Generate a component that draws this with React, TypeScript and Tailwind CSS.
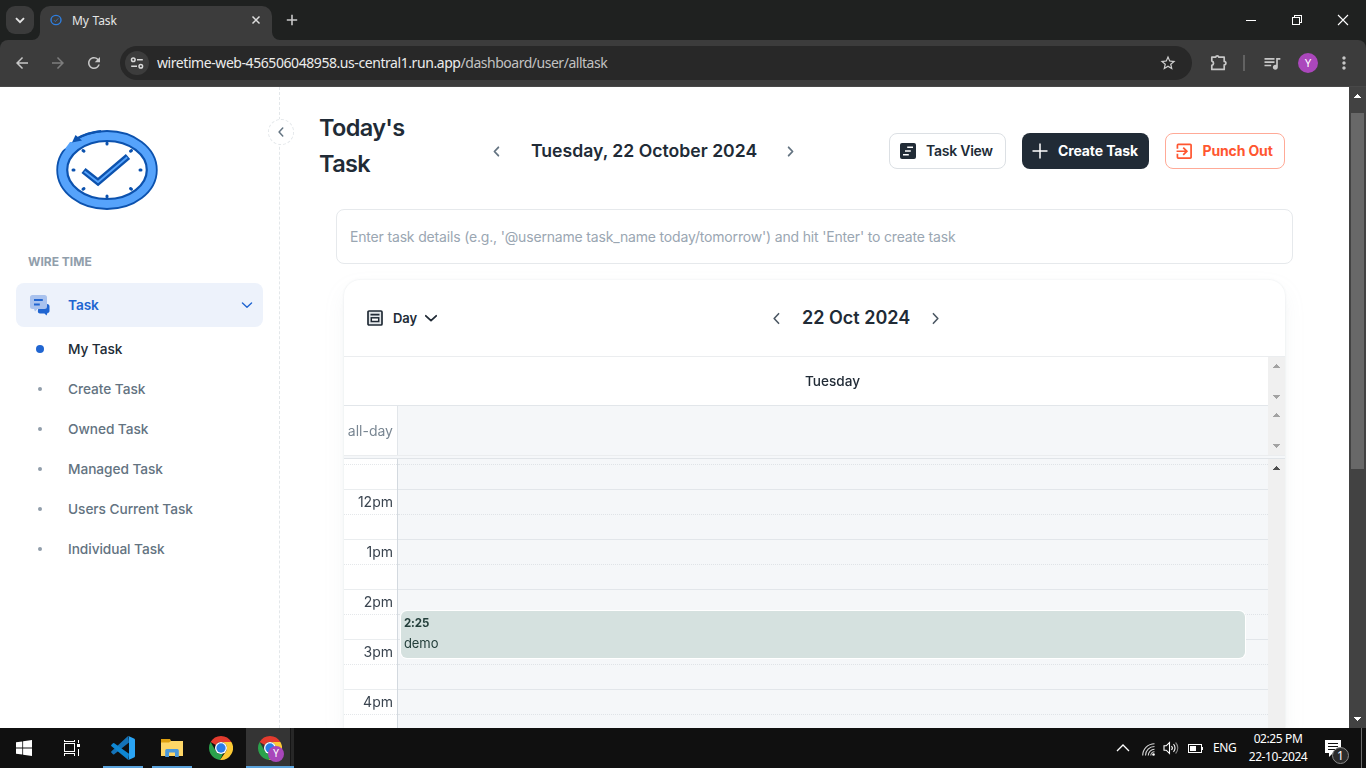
import type { ReactNode } from "react";
import { MdArrowBack, MdArrowForward, MdExitToApp, MdMoreVert, MdQueueMusic, MdRefresh, MdStarBorder } from "react-icons/md";

function Chevron({ dir, className, size = 16, stroke = 1.6 }: { dir: "left" | "right" | "down"; className?: string; size?: number; stroke?: number }) {
  const d = { left: "M10 3.5 5.8 8 10 12.5", right: "M6 3.5 10.2 8 6 12.5", down: "M2.8 5.8 8 10.6 13.2 5.8" }[dir];
  return (
    <svg width={size} height={size} viewBox="0 0 16 16" fill="none" stroke="currentColor" strokeWidth={stroke} strokeLinecap="round" strokeLinejoin="round" className={className}>
      <path d={d} />
    </svg>
  );
}

function Triangle({ up, className }: { up?: boolean; className?: string }) {
  return (
    <svg width="7" height="4" viewBox="0 0 7 4" shapeRendering="crispEdges" fill="currentColor" className={className}>
      {up ? <path d="M3 0h1v1H3zM2 1h3v1H2zM1 2h5v1H1zM0 3h7v1H0z" /> : <path d="M0 0h7v1H0zM1 1h5v1H1zM2 2h3v1H2zM3 3h1v1H3z" />}
    </svg>
  );
}

function ChromeLogo({ size = 24 }: { size?: number }) {
  return (
    <svg width={size} height={size} viewBox="0 0 48 48">
      <path fill="#e33b2e" d="M24 0a24 24 0 0 1 20.8 12H24a12 12 0 0 0-10.4 6L3.2 12A24 24 0 0 1 24 0z" />
      <path fill="#2ba24c" d="M3.2 12 13.6 30A12 12 0 0 0 24 36c1.5 0 3-.3 4.3-.8L22 47.9A24 24 0 0 1 3.2 12z" />
      <path fill="#fcc934" d="M44.8 12A24 24 0 0 1 24 48h-2l12.4-18A12 12 0 0 0 24 12z" />
      <circle cx="24" cy="24" r="12" fill="#fff" />
      <circle cx="24" cy="24" r="9.3" fill="#2a7de9" />
    </svg>
  );
}

function TabStrip() {
  return (
    <div className="flex h-10 shrink-0 items-start bg-[#1f2120] pl-1.5 pt-1.5">
      <div className="flex size-7 items-center justify-center rounded-[9px] bg-[#3b3b3b] text-[#e3e3e3]">
        <svg width="10" height="7" viewBox="0 0 10 7" fill="none" stroke="currentColor" strokeWidth="1.9"><path d="M1 1.2 5 5.2 9 1.2" /></svg>
      </div>
      <div className="relative ml-1.5 flex h-[34px] w-[232px] items-center rounded-t-[10px] bg-[#3c3c3c] pb-1.5 pl-[10px]">
        <svg className="absolute -left-2 bottom-0" width="8" height="8"><path d="M8 0v8H0A8 8 0 0 0 8 0z" fill="#3c3c3c" /></svg>
        <svg className="absolute -right-2 bottom-0" width="8" height="8"><path d="M0 0v8h8A8 8 0 0 1 0 0z" fill="#3c3c3c" /></svg>
        <svg width="12" height="12" viewBox="0 0 12 12" fill="none" stroke="#2f7fe0"><ellipse cx="6" cy="6" rx="5" ry="4.6" strokeWidth="1.4" /><path d="M4 6.2 5.4 7.600 8.300 4.300" strokeWidth=".7" /></svg>
        <span className="ml-2.5 mt-px text-[12px] leading-4 tracking-[-0.12px] text-[#e6e6e6] [word-spacing:0.8px]">My Task</span>
        <svg className="ml-auto mr-[11px]" width="10" height="10" viewBox="0 0 10 10" stroke="#dedede" strokeWidth="1.5"><path d="M1.5 1.5 8.5 8.5M8.5 1.5 1.5 8.5" /></svg>
      </div>
      <svg className="ml-[14px] mt-2" width="12" height="12" viewBox="0 0 12 12" stroke="#c9c9c9" strokeWidth="1.6"><path d="M6 .8v10.4M.8 6h10.4" /></svg>
      <div className="ml-auto mt-2 flex items-center gap-9 pr-[17px] text-white">
        <svg width="10" height="12" viewBox="0 0 10 12" shapeRendering="crispEdges" fill="currentColor" className="translate-x-px"><path d="M0 6h10v1H0z" /></svg>
        <svg width="10" height="10" viewBox="0 0 10 10" fill="none" stroke="currentColor" shapeRendering="crispEdges" className="translate-x-px"><path d="M.5 2.5h7v7h-7zM2.5 2.5v-2h7v7h-2" /></svg>
        <svg width="12" height="12" viewBox="0 0 12 12" stroke="currentColor" strokeWidth="1.1"><path d="M1 1 11 11M11 1 1 11" /></svg>
      </div>
    </div>
  );
}

function Toolbar() {
  return (
    <div className="h-[47px] shrink-0 bg-[#1f2120]">
      <div className="flex h-full items-start rounded-t-[8px] border-b border-[#484848] bg-[#3c3c3c] pl-[13px] pt-1.5">
        <div className="flex h-[34px] items-center gap-[18px] text-[#c7c7c7]">
          <MdArrowBack size={18} />
          <MdArrowForward size={18} className="text-[#7d7d7d]" />
          <MdRefresh size={18} />
        </div>
        <div className="ml-[17px] flex h-[34px] w-[1072px] items-center rounded-full bg-[#282828] pl-[5px] pr-[15px]">
          <div className="flex size-6 items-center justify-center rounded-full bg-[#3c3c3c]">
            <svg width="14" height="14" viewBox="0 0 14 14" fill="none" stroke="#dadada" strokeWidth="1.5"><circle cx="3.3" cy="3.7" r="1.8" /><path d="M7 3.7h5.800M1.200 10.200H7" /><circle cx="10.8" cy="10.2" r="1.8" /></svg>
          </div>
          <div className="ml-2 whitespace-nowrap text-[14px] leading-5 text-[#c2c2c2]">
            <span className="tracking-[-0.43px] text-[#ececec]">wiretime-web-456506048958.us-central1.run.app</span>
            <span className="tracking-[-0.48px]">/dashboard/user/alltask</span>
          </div>
          <MdStarBorder size={18} className="ml-auto text-[#d0d0d0]" />
        </div>
        <div className="flex h-[34px] items-center text-[#c7c7c7]">
          <svg className="ml-[18px]" width="18" height="18" viewBox="0 0 18 18" fill="none" stroke="currentColor" strokeWidth="1.7" strokeLinejoin="round">
            <path d="M1.800 3.200h3.800a1.700 1.700 0 0 1 3.300 0h5.300v4.200a1.700 1.700 0 0 1 0 3.400v4.600H1.800v-4a2.200 2.200 0 0 0 0-4.300z" />
          </svg>
          <div className="ml-[15px] mr-[17px] h-4 w-0.5 bg-[#626262]" />
          <MdQueueMusic size={20} />
          <div className="ml-[16px] flex size-5 items-center justify-center rounded-full bg-[#ab47bc] font-['Roboto'] text-[11px] leading-none text-white">Y</div>
          <MdMoreVert size={20} className="ml-[16px]" />
        </div>
      </div>
    </div>
  );
}

function Logo() {
  return (
    <svg width="104" height="82" viewBox="0 0 104 82" fill="none">
      <ellipse cx="52" cy="41" rx="44.7" ry="33.9" stroke="#0c52ae" strokeWidth="12" />
      <ellipse cx="52" cy="41" rx="44.9" ry="34.1" stroke="#56a3fb" strokeWidth="8" />
      <path d="M2 25 7 17 17 9 25 5 18 14z" fill="#fff" />
      <path d="M9.500 20.500 15 13 22 13 16 19z" fill="#56a3fb" />
      <path d="M22 9.500 C30 5.200 38 3 46 2.200" stroke="#0c52ae" strokeWidth="2.200" />
      <path d="M17 13.500 20.500 6 27 11.500z" fill="#0c52ae" />
      <path d="M28.500 41.500 43 53 73 27.500" stroke="#0c52ae" strokeWidth="6.600" />
      <path d="M29.500 42.500 43 53 72.200 28.300" stroke="#56a3fb" strokeWidth="1.800" />
      <g stroke="#0c52ae" strokeWidth="3" strokeLinecap="round">
        <path d="M52 14v1M52 67v1M18 41h1M85 41h1M28 21.500l1 .7M75.500 22.200l1-.7M28 60.200l1-.7M75.500 59.500l1 .7" />
      </g>
    </svg>
  );
}

const subItems = ["Create Task", "Owned Task", "Managed Task", "Users Current Task", "Individual Task"];

function Sidebar() {
  return (
    <aside className="relative flex w-[280px] shrink-0 flex-col border-r border-dashed border-[#e3e7ea] pl-4 pr-4">
      <div className="ml-[39px] mt-[42px]"><Logo /></div>
      <div className="ml-3 mt-[42px] h-[18px] text-[12px] font-bold leading-[18px] text-[#919eab]">WIRE TIME</div>
      <nav className="mt-[12px] flex flex-col gap-1 text-[13.7px] font-medium text-[#637381]">
        <div className="flex h-11 items-center rounded-lg bg-[#edf2fb] pl-3 pr-2 font-semibold text-[#2065d1]">
          <svg width="24" height="24" viewBox="0 0 24 24">
            <path d="M11 11h8a2.500 2.500 0 0 1 2.500 2.500V18c0 1-.8 2-2 2.100L18.500 22.500 16.500 20.500H12a2.300 2.300 0 0 1-2.200-2.300z" fill="#2065d1" />
            <path d="M4.500 2h12A2.500 2.500 0 0 1 19 4.500v9a2.500 2.500 0 0 1-2.500 2.500H9.500L7 18.600 6 16H4.500A2.500 2.500 0 0 1 2 13.500v-9A2.500 2.500 0 0 1 4.500 2z" fill="#a9c2ee" />
            <path d="M6 7h8.800M6 11.500h5.800" stroke="#2065d1" strokeWidth="1.900" />
          </svg>
          <span className="ml-4 tracking-[-0.1px]">Task</span>
          <Chevron dir="down" className="ml-auto mr-px" size={14} stroke={1.6} />
        </div>
        <div className="flex h-9 items-center pl-3 text-[#212b36]">
          <span className="flex w-6 justify-center"><span className="size-2 rounded-full bg-[#2065d1]" /></span>
          <span className="ml-4 tracking-[-0.08px]">My Task</span>
        </div>
        {subItems.map((t) => (
          <div key={t} className="flex h-9 items-center pl-3">
            <span className="flex w-6 justify-center"><span className="size-1 rounded-full bg-[#919eab]" /></span>
            <span className="ml-4 tracking-[-0.06px]">{t}</span>
          </div>
        ))}
      </nav>
      <div className="absolute -right-[15px] top-8 flex size-[26px] items-center justify-center rounded-full border border-dashed border-[#e3e7ea] bg-white text-[#637381]">
        <Chevron dir="left" size={14} stroke={1.7} />
      </div>
    </aside>
  );
}

function PageHeader() {
  return (
    <div className="ml-10 flex h-[72px] w-[965px] items-center">
      <h1 className="-ml-px w-[170px] text-[23.5px] font-semibold leading-9 tracking-[-0.65px] text-[#212b36]">Today's<br />Task</h1>
      <Chevron dir="left" size={15} stroke={1.9} className="mt-[10px] text-[#637381]" />
      <div className="ml-[27px] mt-[10px] w-[226px] whitespace-nowrap text-[17.6px] font-semibold leading-7 tracking-[0.01px] text-[#212b36]">Tuesday, 22 October 2024</div>
      <Chevron dir="right" size={15} stroke={1.9} className="ml-[26px] mt-[10px] text-[#637381]" />
      <div className="ml-auto mt-[10px] flex gap-4 text-[14px] leading-6">
        <button className="flex h-9 w-[117px] items-center whitespace-nowrap rounded-lg border border-[#dce0e4] pl-[10px] font-semibold tracking-[-0.25px] text-[#212b36]">
          <svg width="16" height="16" viewBox="0 0 16 16"><rect width="16" height="16" rx="2" fill="#212b36" /><path d="M7.200 4.300H13M5 8h5.800M3 11.700h5.800" stroke="#fff" strokeWidth="1.400" /></svg>
          <span className="ml-[10px]">Task View</span>
        </button>
        <button className="flex h-9 w-[127px] items-center whitespace-nowrap rounded-lg bg-[#212b36] pl-[10px] font-bold tracking-[-0.12px] text-white">
          <svg width="16" height="16" viewBox="0 0 16 16" stroke="#fff" strokeWidth="1.500"><path d="M8 .5v15M.5 8h15" /></svg>
          <span className="ml-[10px]">Create Task</span>
        </button>
        <button className="flex h-9 w-[120px] items-center whitespace-nowrap rounded-lg border border-[#ffaa97] pl-[8px] font-bold tracking-[-0.14px] text-[#ff5630]">
          <MdExitToApp size={20.5} />
          <span className="ml-[8px]">Punch Out</span>
        </button>
      </div>
    </div>
  );
}

function HourRow({ label }: { label: string }) {
  return (
    <div className="flex h-[50px] shrink-0">
      <div className="flex w-[53px] flex-col">
        <div className="flex h-[25px] items-center justify-end border-t border-[#eaedef] pr-1 text-[14px] leading-6 text-[#3a444f]">{label}</div>
        <div className="h-[25px] border-t border-dotted border-[#e4e7ea]" />
      </div>
      <div className="flex flex-1 flex-col border-l border-[#d3d9df]">
        <div className="h-[25px] border-t border-[#e2e6ea]" />
        <div className="h-[25px] border-t border-dotted border-[#dfe3e7]" />
      </div>
    </div>
  );
}

function ScrollPair({ className }: { className: string }) {
  return (
    <div className={`flex w-[17px] shrink-0 flex-col items-center justify-between bg-[#f0f0f0] text-[#a3a3a3] ${className}`}>
      <Triangle up />
      <Triangle />
    </div>
  );
}

function Calendar() {
  return (
    <section className="ml-[64px] mt-4 flex w-[941px] flex-1 flex-col overflow-hidden rounded-t-[16px] bg-white">
      <div className="flex h-[76px] shrink-0 items-center pl-[23px] text-[#212b36]">
        <svg width="16" height="16" viewBox="0 0 16 16" fill="none" stroke="currentColor" strokeWidth="1.700"><rect x="1" y="1" width="14" height="14" rx="1" fill="#e3e7ea" /><path d="M3.500 4.700h9" /><rect x="4.300" y="7.800" width="7.400" height="3.700" fill="#fff" strokeWidth="1.500" /></svg>
        <span className="ml-[10px] w-6 text-[13px] font-semibold leading-6 tracking-[-0.1px]">Day</span>
        <Chevron dir="down" size={16} stroke={1.8} className="ml-[6px]" />
        <Chevron dir="left" size={17} stroke={1.5} className="ml-[329px] text-[#4b5763]" />
        <span className="ml-[17px] w-[108px] whitespace-nowrap text-[18px] font-semibold leading-7">22 Oct 2024</span>
        <Chevron dir="right" size={17} stroke={1.5} className="ml-[17px] text-[#4b5763]" />
      </div>
      <div className="flex h-[49px] shrink-0 border-t border-[#ebedef]">
        <div className="flex flex-1 items-center justify-center pl-[53px] text-[13.6px] font-medium leading-6 text-[#212b36]">Tuesday</div>
        <ScrollPair className="pb-1.5 pt-[7px]" />
      </div>
      <div className="flex h-[50px] shrink-0">
        <div className="flex flex-1 border-t border-[#e2e6ea]">
          <div className="flex w-[53px] items-center justify-end pr-1 text-[14px] leading-6 text-[#7a8793]">all-day</div>
          <div className="flex-1 border-l border-[#e2e6ea] bg-[#f5f7f9]" />
        </div>
        <ScrollPair className="pb-[7px] pt-2" />
      </div>
      <div className="h-1 shrink-0 border-y border-b-[#e0e4e8] border-t-[#ebedef] bg-[#f5f7f9]" />
      <div className="flex min-h-0 flex-1">
        <div className="relative flex-1 overflow-hidden bg-[linear-gradient(to_right,#fff_53px,#f5f7f9_53px)]">
          <div className="flex h-[5px]"><div className="w-[53px]" /><div className="flex-1 border-l border-[#d3d9df]" /></div>
          <div className="flex h-[25px]">
            <div className="w-[53px] border-t border-dotted border-[#e4e7ea]" />
            <div className="flex flex-1 border-l border-[#d3d9df]"><div className="flex-1 border-t border-dotted border-[#dfe3e7]" /></div>
          </div>
          {["12pm", "1pm", "2pm", "3pm", "4pm"].map((h) => <HourRow key={h} label={h} />)}
          <div className="absolute left-[57px] top-[152px] h-[47px] w-[844px] rounded-md bg-[#d5e1df] px-[3px] text-[#243f3b] ring-1 ring-white">
            <div className="pt-[3px] text-[11.5px] font-bold leading-[18px] tracking-[-0.15px]">2:25</div>
            <div className="pt-px text-[13px] leading-5 tracking-[-0.1px]">demo</div>
          </div>
        </div>
        <div className="flex w-[17px] justify-center bg-[#f0f0f0] pt-[7px] text-[#505050]"><Triangle up /></div>
      </div>
    </section>
  );
}

function TaskbarApp({ children }: { children: ReactNode }) {
  return <div className="flex h-10 w-12 items-center justify-center">{children}</div>;
}

function Taskbar() {
  return (
    <footer className="flex h-10 shrink-0 items-center bg-[#101010] text-[12px] text-white">
      <TaskbarApp>
        <svg width="16" height="16" viewBox="0 0 16 16" fill="#fff"><path d="M0 2.300 6.300 1.400V7.500H0zM7.100 1.300 16 0V7.500H7.100zM0 8.400h6.300v6.100L0 13.700zM7.100 8.400H16V16L7.100 14.700z" /></svg>
      </TaskbarApp>
      <TaskbarApp>
        <svg width="16" height="16" viewBox="0 0 16 16" fill="none" stroke="#fff" shapeRendering="crispEdges"><path d="M.5 3.500h10v8H.5zM.5 0v1.500h10V0M.5 16v-2.500h10V16M14.500 0v3M14.500 9v7" /><path d="M13 4h3v3h-3z" fill="#fff" stroke="none" /></svg>
      </TaskbarApp>
      <div className="ml-[7px] flex h-10 w-10 items-center justify-center border-b-2 border-[#5ba3dc] pt-0.5">
        <svg width="24" height="24" viewBox="0 0 24 24">
          <path fill="#1573b8" d="M17.300 0 18 6.500 3.300 18.200a1 1 0 0 1-1.300 0L.5 16.800a1 1 0 0 1 0-1.500L16.500.4z" />
          <path fill="#0f87d2" d="M.5 8.700 2 7.300a1 1 0 0 1 1.300-.1L18 17.700 17.300 24 .5 10.200a1 1 0 0 1 0-1.500z" />
          <path fill="#2aa4f4" d="M17.400 0 23 2.500a1.700 1.700 0 0 1 1 1.500v16a1.700 1.700 0 0 1-1 1.500L17.400 24a1.700 1.700 0 0 1-1-.4c.7.600 1.600.1 1.600-.8V1.200c0-.9-1-1.300-1.600-.8z" />
        </svg>
      </div>
      <div className="ml-[9px] flex h-10 w-10 items-center justify-center border-b-2 border-[#5ba3dc] pt-0.5">
        <svg width="22" height="18" viewBox="0 0 22 18"><path fill="#dfa010" d="M0 0h9l1.300 2.500H22V8H0z" /><path fill="#ffd767" d="M0 3.500h8L10 2h12v15H0z" /><path fill="#4a98dc" d="M4.200 18v-6.500A1.500 1.500 0 0 1 5.700 10h10.600a1.500 1.500 0 0 1 1.500 1.500V18H14v-4.500H8V18z" /></svg>
      </div>
      <div className="ml-[9px] flex h-10 w-10 items-center justify-center"><ChromeLogo /></div>
      <div className="relative ml-[5px] flex h-10 w-12 items-center border-b-2 border-[#5ba3dc] bg-[#343434] pl-3 pt-0.5">
        <ChromeLogo />
        <span className="absolute left-[22px] top-[18px] flex size-4 items-center justify-center rounded-full bg-[#a846ba] font-['Roboto'] text-[10px] leading-none text-white">Y</span>
        <span className="absolute right-0 top-0 h-[38px] w-1 border-l border-[#151515] bg-[#272727]" />
      </div>
      <div className="ml-auto flex h-10 items-center">
        <svg width="14" height="8" viewBox="0 0 14 8" fill="none" stroke="#fff" strokeWidth="1.300"><path d="M1 7 7 1 13 7" /></svg>
        <svg className="ml-3 mt-0.5" width="13" height="13" viewBox="0 0 13 13" fill="none" stroke="#d8d8d8" strokeWidth="1.100"><path d="M.7 12.500A11.800 11.800 0 0 1 12.500.7M3.500 12.500a9 9 0 0 1 9-9M6.300 12.500a6.200 6.200 0 0 1 6.200-6.200M8.800 12.500a3.700 3.700 0 0 1 3.700-3.700" /><circle cx="11.500" cy="11.500" r="1.300" fill="#fff" stroke="none" /></svg>
        <svg className="ml-2" width="17" height="14" viewBox="0 0 17 14" fill="none" stroke="#fff" strokeWidth="1.100"><path d="M1 4.800h2.200L6.500 1.500v11L3.200 9.200H1zM8.500 5a3 3 0 0 1 0 4M10.500 3.200a5.500 5.500 0 0 1 0 7.600" /><path d="M12.600 1.500a8 8 0 0 1 0 11" stroke="#888" /></svg>
        <svg className="ml-2" width="15" height="9" viewBox="0 0 15 9" shapeRendering="crispEdges"><path d="M.5.5h12.500v8H.5z" fill="none" stroke="#fff" /><path d="M2 2h6v5H2zM13 3h2v3h-2z" fill="#fff" /></svg>
        <span className="ml-[10px] w-[23px] tracking-[-0.4px]">ENG</span>
        <div className="ml-[12px] w-[60px] whitespace-nowrap text-center leading-[18px] tracking-[-0.4px]"><div>02:25 PM</div><div>22-10-2024</div></div>
        <div className="relative ml-[17px] size-6">
          <svg className="mt-1" width="16" height="17" viewBox="0 0 16 17"><path d="M0 0h16v13H8L4 17V13H0z" fill="#fff" /><path d="M3 3.500h10M3 6.500h10M3 9.500h7" stroke="#101010" /></svg>
          <span className="absolute left-[7px] top-[11px] flex size-[17px] items-center justify-center rounded-full border border-[#8b8b8b] bg-[#2c2c2c] text-[12px] leading-none">1</span>
        </div>
        <div className="ml-3 h-10 w-[5px] border-l border-[#6b6b6b]" />
      </div>
    </footer>
  );
}

export default function App() {
  return (
    <div className="flex h-[768px] w-[1366px] flex-col overflow-hidden bg-white font-['Noto_Sans',sans-serif]">
      <TabStrip />
      <Toolbar />
      <div className="flex min-h-0 flex-1 font-['Inter',sans-serif]">
        <Sidebar />
        <main className="flex w-[1069px] shrink-0 flex-col overflow-hidden pt-[23px]">
          <PageHeader />
          <input
            className="ml-14 mt-[27px] h-[55px] w-[957px] shrink-0 rounded-lg border border-[#e6e9ec] px-[13px] text-[14px] tracking-[-0.17px] text-[#919eab] placeholder:text-[#9aa6b2] placeholder:opacity-100"
            placeholder="Enter task details (e.g., '@username task_name today/tomorrow') and hit 'Enter' to create task"
          />
          <div className="flex min-h-0 flex-1 drop-shadow-[0_0_1px_rgba(145,158,171,0.2)]">
            <div className="flex drop-shadow-[0_10px_10px_rgba(145,158,171,0.09)]"><Calendar /></div>
          </div>
        </main>
        <div className="flex w-[17px] flex-col items-center justify-between bg-[#424242] pb-[7px] pt-[7px] text-white">
          <Triangle up />
          <div className="mb-auto mt-[15px] h-[356px] w-[13px] bg-[#686868]" />
          <Triangle />
        </div>
      </div>
      <Taskbar />
    </div>
  );
}
